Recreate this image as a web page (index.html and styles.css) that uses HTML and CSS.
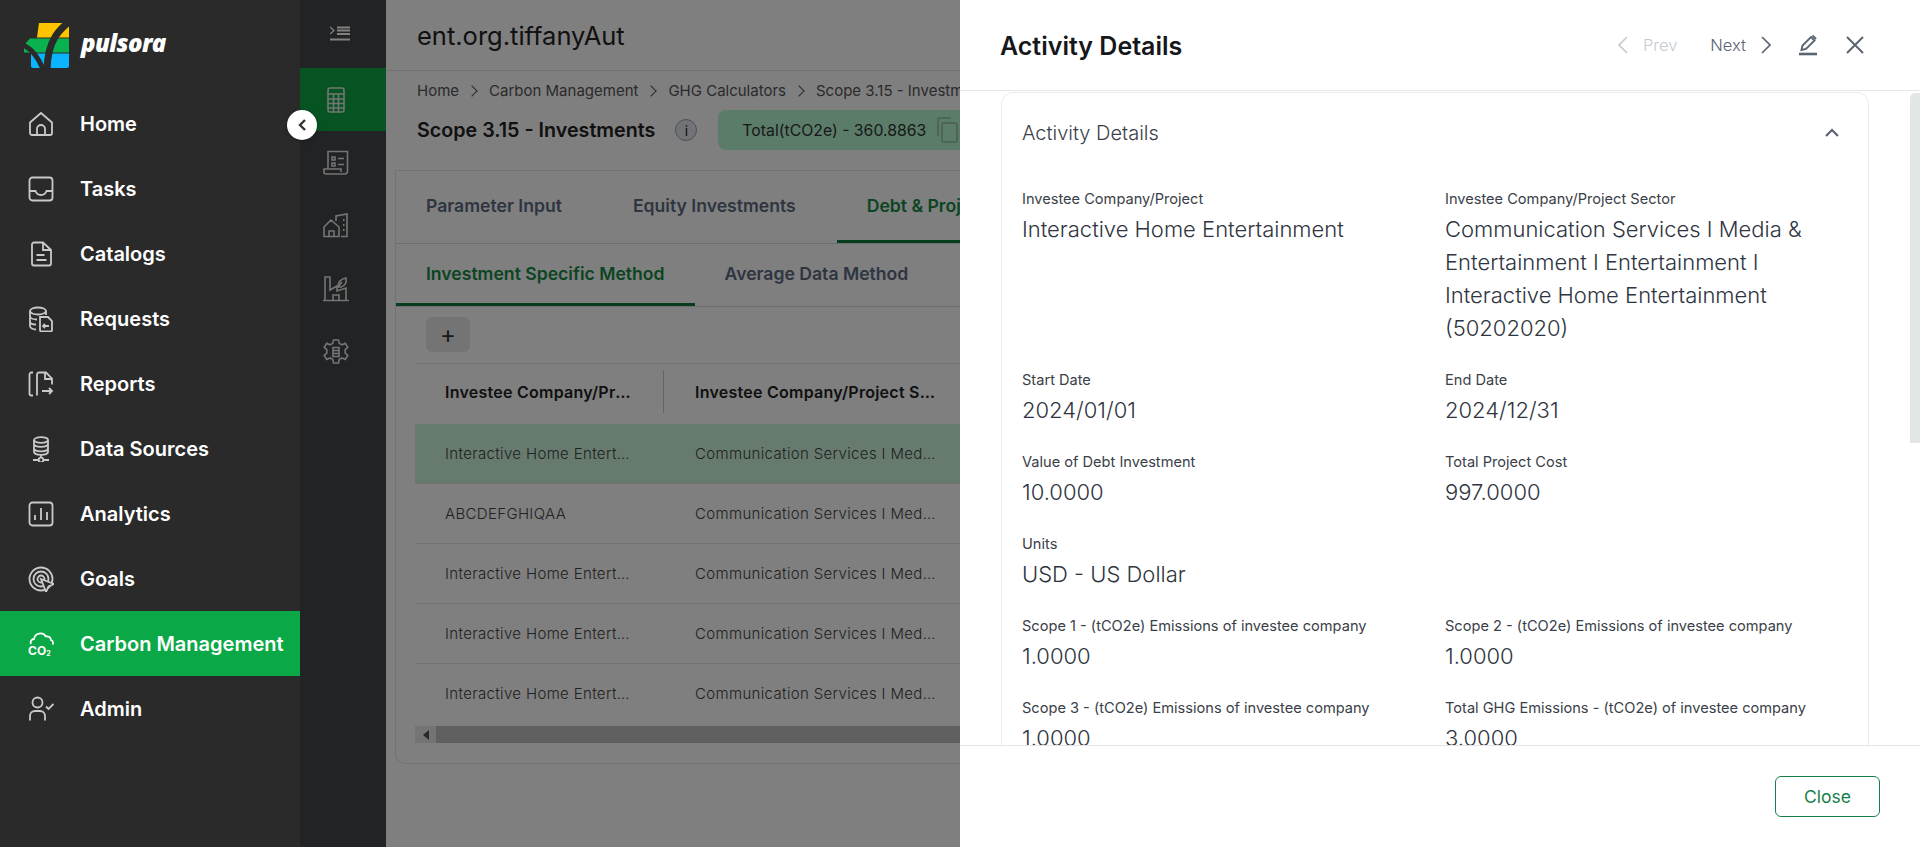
FILE: index.html
```html
<!DOCTYPE html>
<html lang="en">
<head>
  <meta charset="UTF-8" />
  <title>Pulsora - Scope 3.15 Investments</title>
  <link rel="stylesheet" href="styles.css">
</head>
<body>
  <div class="app">
    <aside class="sidebar">
      <div class="logo">
        <svg class="logo-mark" width="48" height="48" viewBox="0 0 48 48">
          <path d="M15 2h29a1 1 0 0 1 1 1v13.500H13z" fill="#ffc400"/>
          <path d="M6 17.500h39v14H0V24z" fill="#0ab14f"/>
          <path d="M7 32.500h38V45a2 2 0 0 1-2 2H9a2 2 0 0 1-2-2z" fill="#0bb4ff"/>
          <path d="M46 0C36 8 24 18 23 48" fill="none" stroke="#2a2a2a" stroke-width="7"/>
          <path d="M-1 24C8 28 14 36 19 48" fill="none" stroke="#2a2a2a" stroke-width="5"/>
        </svg>
        <span class="logo-text">pulsora</span>
      </div>
      <nav class="nav">
        <a class="nav-item">
          <svg class="nav-icon" viewBox="0 0 26 26"><path d="M2 22V11.500L13 2l11 9.500V22a2 2 0 0 1-2 2H4a2 2 0 0 1-2-2z"/><path d="M9 24v-6a4 4 0 0 1 8 0v6"/></svg>
          Home
        </a>
        <a class="nav-item">
          <svg class="nav-icon" viewBox="0 0 26 26"><rect x="1.500" y="1.500" width="23" height="23" rx="3"/><path d="M1.500 15h6c1 3 3 4 5.500 4s4.500-1 5.500-4h6"/></svg>
          Tasks
        </a>
        <a class="nav-item">
          <svg class="nav-icon" viewBox="0 0 26 26"><path d="M15 1.500H6a2 2 0 0 0-2 2v19a2 2 0 0 0 2 2h15a2 2 0 0 0 2-2V9z"/><path d="M15 1.500V9h8M8.500 14h8M8.500 19h10"/></svg>
          Catalogs
        </a>
        <a class="nav-item">
          <svg class="nav-icon" viewBox="0 0 26 26"><ellipse cx="10" cy="5" rx="8" ry="3.500"/><path d="M2 5v15c0 2 3 3.500 6 3.500M18 5v4M2 10c0 2 3 3.500 7 3.500M2 15.500c0 2 3 3 6 3"/><path d="M12 11h8l4 4v9a1.500 1.500 0 0 1-1.500 1.500h-9A1.500 1.500 0 0 1 12 24z"/><path d="M21 20h-6m2-2l-2 2 2 2"/></svg>
          Requests
        </a>
        <a class="nav-item">
          <svg class="nav-icon" viewBox="0 0 26 26"><path d="M5 1.500H3.500a2 2 0 0 0-2 2v19a2 2 0 0 0 2 2H5"/><path d="M9 24.500V3.500a2 2 0 0 1 2-2h7l6 6v6"/><path d="M17 2v6h7M14 20h10m-3-3l3 3-3 3"/></svg>
          Reports
        </a>
        <a class="nav-item">
          <svg class="nav-icon" viewBox="0 0 26 26"><ellipse cx="13" cy="4" rx="7" ry="2.800"/><path d="M6 4v12c0 1.500 3 2.800 7 2.800s7-1.300 7-2.800V4M6 8c0 1.500 3 2.800 7 2.800S20 9.500 20 8M6 12.500c0 1.500 3 2.800 7 2.800s7-1.300 7-2.800M13 19v2.500M5 24h5.500m5 0H21"/><circle cx="13" cy="24" r="2.300"/></svg>
          Data Sources
        </a>
        <a class="nav-item">
          <svg class="nav-icon" viewBox="0 0 26 26"><rect x="1.500" y="1.500" width="23" height="23" rx="3"/><path d="M7 19v-5M13 19V7M19 19v-8"/></svg>
          Analytics
        </a>
        <a class="nav-item">
          <svg class="nav-icon" viewBox="0 0 26 26"><circle cx="13" cy="13" r="11.500"/><circle cx="13" cy="13" r="7.500"/><circle cx="13" cy="13" r="3.500"/><path class="cursor" d="M13 13l13 5-5.500 2.500L18 26z"/></svg>
          Goals
        </a>
        <a class="nav-item is-active">
          <svg class="nav-icon" viewBox="0 0 26 26"><path d="M3 13a3.500 3.500 0 0 1 3-5A6.500 6.500 0 0 1 18 5.500a4 4 0 0 1 5 3.500 3 3 0 0 1 1.500 4.500"/><text class="co2" x="0" y="24">CO<tspan class="co2-sub" dy="1">2</tspan></text></svg>
          Carbon Management
        </a>
        <a class="nav-item">
          <svg class="nav-icon" viewBox="0 0 26 26"><circle cx="9.500" cy="6.500" r="5"/><path d="M2 24.500V20a5 5 0 0 1 5-5h5a5 5 0 0 1 5 5v4.500M18 10.500l2.500 2.500 5-5"/></svg>
          Admin
        </a>
      </nav>
      <button class="collapse-btn">
        <svg width="12" height="14" viewBox="0 0 12 14"><path d="M9 2L4 7l5 5" fill="none" stroke="#333" stroke-width="2.400"/></svg>
      </button>
    </aside>

    <div class="rail">
      <div class="rail-toggle">
        <svg width="20" height="16" viewBox="0 0 20 16"><path d="M0 1l4 3.500L0 8" fill="none" stroke="#828282" stroke-width="1.300"/><path d="M7 1.500h13M7 4.500h13M7 8h13M0 13.500h20" stroke="#828282" stroke-width="2"/></svg>
      </div>
      <a class="rail-item is-active">
        <svg class="rail-icon" viewBox="0 0 26 26"><rect x="5" y="1" width="16" height="24" rx="2"/><path d="M5 7h16M5 12h16M5 16.500h16M5 21h16M10.500 7v18M15.500 7v18"/></svg>
      </a>
      <a class="rail-item">
        <svg class="rail-icon" viewBox="0 0 26 26"><path d="M5 19V1.500h19.500V21a3 3 0 0 1-3 3H3a2 2 0 0 1-2-2v-3h17v3"/><path d="M9 7h3v3H9zM9 13h3v3H9zM15 8.500h6M15 14.500h6"/></svg>
      </a>
      <a class="rail-item">
        <svg class="rail-icon" viewBox="0 0 26 26"><path d="M1 23.500V14l7-7 8 7v9.500zM6 23.500V18h5v5.500M13 8V3l11-2v22.500h-6"/><path d="M20 7h1.500M20 12h1.500M20 17h1.500" stroke-width="2.200"/></svg>
      </a>
      <a class="rail-item">
        <svg class="rail-icon" viewBox="0 0 26 26"><path d="M0 24.500h26M2 24.500V1h5v13l7-4v5l9-3v12.500M10 24.500V19h6v5.500"/><path d="M15 11c0-5 3-8 8-9 1 4-1 8-5 9zM15 11l4-5"/></svg>
      </a>
      <a class="rail-item">
        <svg class="rail-icon" viewBox="0 0 26 26"><path d="M10.500 1h5l.8 3.500 2.700 1.300 3.300-1.500 2.500 4-2.600 2.400v3.400l2.600 2.400-2.500 4-3.300-1.500-2.700 1.300-.8 3.700h-5l-.8-3.700-2.700-1.300-3.300 1.500-2.500-4 2.600-2.400v-3.400L1.200 8.300l2.500-4L7 5.800l2.700-1.300z"/><path d="M10 8.500h6v9h-6zM10 11.500h6M10 14.500h6"/></svg>
      </a>
    </div>

    <main class="main">
      <header class="topbar">ent.org.tiffanyAut</header>
      <div class="crumbs">
        <span>Home</span><i class="crumb-sep"></i>
        <span>Carbon Management</span><i class="crumb-sep"></i>
        <span>GHG Calculators</span><i class="crumb-sep"></i>
        <span>Scope 3.15 - Investments</span>
      </div>
      <div class="page-title">
        <h1>Scope 3.15 - Investments</h1>
        <span class="info-dot">i</span>
        <div class="total-pill">
          Total(tCO2e) - 360.8863
          <svg width="22" height="26" viewBox="0 0 22 26"><path d="M2 19V3a2 2 0 0 1 2-2h11" fill="none" stroke="#9cc9ae" stroke-width="2"/><rect x="6" y="6" width="15" height="19" rx="2" fill="none" stroke="#9cc9ae" stroke-width="2"/></svg>
        </div>
      </div>
      <section class="panel">
        <div class="tabs">
          <a class="tab">Parameter Input</a>
          <a class="tab">Equity Investments</a>
          <a class="tab is-active">Debt &amp; Project Finance</a>
        </div>
        <div class="tabs sub-tabs">
          <a class="tab is-active">Investment Specific Method</a>
          <a class="tab">Average Data Method</a>
        </div>
        <div class="toolbar"><button class="add-btn">+</button></div>
        <div class="grid">
          <div class="grid-head">
            <div class="cell first"><span class="ellip">Investee Company/Project</span></div>
            <div class="cell second"><span class="ellip">Investee Company/Project Sector</span></div>
          </div>
          <div class="grid-row is-selected">
            <div class="cell first"><span class="ellip">Interactive Home Entertainment</span></div>
            <div class="cell second"><span class="ellip">Communication Services I Media &amp; Entertainment</span></div>
          </div>
          <div class="grid-row">
            <div class="cell first"><span class="ellip">ABCDEFGHIQAA</span></div>
            <div class="cell second"><span class="ellip">Communication Services I Media &amp; Entertainment</span></div>
          </div>
          <div class="grid-row">
            <div class="cell first"><span class="ellip">Interactive Home Entertainment</span></div>
            <div class="cell second"><span class="ellip">Communication Services I Media &amp; Entertainment</span></div>
          </div>
          <div class="grid-row">
            <div class="cell first"><span class="ellip">Interactive Home Entertainment</span></div>
            <div class="cell second"><span class="ellip">Communication Services I Media &amp; Entertainment</span></div>
          </div>
          <div class="grid-row">
            <div class="cell first"><span class="ellip">Interactive Home Entertainment</span></div>
            <div class="cell second"><span class="ellip">Communication Services I Media &amp; Entertainment</span></div>
          </div>
          <div class="grid-scroll">
            <span class="scroll-arrow"></span>
            <span class="scroll-thumb"></span>
          </div>
        </div>
      </section>
    </main>

    <div class="drawer">
      <header class="drawer-head">
        <h2>Activity Details</h2>
        <div class="drawer-actions">
          <span class="pager is-disabled">
            <svg width="12" height="20" viewBox="0 0 12 20"><path d="M10 2L2 10l8 8" fill="none" stroke="#c6cad0" stroke-width="1.700"/></svg>
            Prev
          </span>
          <span class="pager">
            Next
            <svg width="12" height="20" viewBox="0 0 12 20"><path d="M2 2l8 8-8 8" fill="none" stroke="#5b6472" stroke-width="1.700"/></svg>
          </span>
          <svg class="edit-icon" width="20" height="22" viewBox="0 0 20 22"><path d="M3.500 16l1-4.500L13 3l3.500 3.500L8 15z" fill="none" stroke="#5b6472" stroke-width="1.900"/><path d="M14.500 1.500l3.500 3.500" stroke="#5b6472" stroke-width="1.900"/><path d="M1 20h18" stroke="#5b6472" stroke-width="2.600"/></svg>
          <svg class="close-icon" width="20" height="20" viewBox="0 0 20 20"><path d="M2 2l16 16M18 2L2 18" stroke="#5b6472" stroke-width="2"/></svg>
        </div>
      </header>
      <div class="drawer-body">
        <div class="detail-card">
          <div class="detail-head">
            <span>Activity Details</span>
            <svg width="16" height="10" viewBox="0 0 16 10"><path d="M2 8l6-6 6 6" fill="none" stroke="#5b6472" stroke-width="2.200"/></svg>
          </div>
          <div class="fields">
            <div class="field"><label>Investee Company/Project</label><div class="value">Interactive Home Entertainment</div></div>
            <div class="field"><label>Investee Company/Project Sector</label><div class="value">Communication Services I Media &amp; Entertainment I Entertainment I Interactive Home Entertainment (50202020)</div></div>
            <div class="field"><label>Start Date</label><div class="value">2024/01/01</div></div>
            <div class="field"><label>End Date</label><div class="value">2024/12/31</div></div>
            <div class="field"><label>Value of Debt Investment</label><div class="value">10.0000</div></div>
            <div class="field"><label>Total Project Cost</label><div class="value">997.0000</div></div>
            <div class="field full"><label>Units</label><div class="value">USD - US Dollar</div></div>
            <div class="field"><label>Scope 1 - (tCO2e) Emissions of investee company</label><div class="value">1.0000</div></div>
            <div class="field"><label>Scope 2 - (tCO2e) Emissions of investee company</label><div class="value">1.0000</div></div>
            <div class="field"><label>Scope 3 - (tCO2e) Emissions of investee company</label><div class="value">1.0000</div></div>
            <div class="field"><label>Total GHG Emissions - (tCO2e) of investee company</label><div class="value">3.0000</div></div>
          </div>
        </div>
        <span class="drawer-scroll"></span>
      </div>
      <footer class="drawer-foot">
        <button class="close-btn">Close</button>
      </footer>
    </div>
  </div>
</body>
</html>
```

FILE: styles.css
```css
:root {
  --side-bg: #2a2a2a;
  --rail-bg: #222325;
  --green: #0aa846;
  --green-dark: #17804a;
  --text: #2f3540;
}

* {
  box-sizing: border-box;
}

body {
  margin: 0;
  height: 847px;
  overflow: hidden;
  font-family: Inter, "Noto Sans", sans-serif;
  color: var(--text);
}

.app {
  display: flex;
  position: relative;
  height: 847px;
  overflow: hidden;
}

/* left nav */
.sidebar {
  position: relative;
  flex: 0 0 300px;
  background: var(--side-bg);
}

.logo {
  display: flex;
  align-items: center;
  height: 91px;
  padding: 0 0 1px 24px;
}

.logo-mark {
  flex: none;
  overflow: hidden;
}

.logo-text {
  margin: 0 0 5px 9px;
  font-family: "Open Sans", sans-serif;
  font-size: 24px;
  font-weight: 800;
  font-style: italic;
  letter-spacing: -0.6px;
  color: #fff;
}

.nav-item {
  display: flex;
  align-items: center;
  height: 65px;
  padding-left: 28px;
  font-size: 20px;
  font-weight: 600;
  color: #fff;
}

.nav-item.is-active {
  background: var(--green);
}

.nav-icon {
  width: 26px;
  height: 26px;
  margin-right: 26px;
  fill: none;
  stroke: #c9c9c9;
  stroke-width: 1.8;
}

.is-active .nav-icon {
  stroke: #fff;
}

.cursor {
  fill: var(--side-bg);
}

.co2 {
  fill: #fff;
  stroke: none;
  font-size: 12px;
  font-weight: 700;
}

.co2-sub {
  font-size: 7px;
}

.collapse-btn {
  position: absolute;
  top: 110px;
  right: -17px;
  z-index: 3;
  display: flex;
  align-items: center;
  justify-content: center;
  width: 30px;
  height: 30px;
  padding: 0;
  border: none;
  border-radius: 50%;
  background: #fff;
  box-shadow: 0 1px 4px rgba(0, 0, 0, 0.3);
}

/* second rail */
.rail {
  flex: 0 0 86px;
  background: var(--rail-bg);
}

.rail-toggle {
  display: flex;
  align-items: center;
  height: 68px;
  padding: 0 0 0 30px;
}

.rail-item {
  display: flex;
  align-items: center;
  height: 63px;
  padding-left: 23px;
}

.rail-item.is-active {
  background: #075423;
}

.rail-icon {
  width: 26px;
  height: 26px;
  fill: none;
  stroke: #757575;
  stroke-width: 1.6;
}

/* dimmed page */
.main {
  position: relative;
  flex: 1;
  min-width: 0;
  background: #fff;
}

.main::after {
  content: "";
  position: absolute;
  inset: 0;
  background: rgba(0, 0, 0, 0.5);
}

.topbar {
  height: 71px;
  padding: 18px 0 0 31px;
  border-bottom: 1px solid #e2e2e2;
  font-size: 25.5px;
  line-height: 35px;
  color: #222;
}

.crumbs {
  display: flex;
  align-items: center;
  height: 39px;
  padding-left: 31px;
  font-size: 15px;
  color: #555;
  white-space: nowrap;
}

.crumb-sep {
  flex: none;
  width: 8px;
  height: 8px;
  margin: 0 13px 0 9px;
  border-top: 1px solid #555;
  border-right: 1px solid #555;
  transform: rotate(45deg);
}

.page-title {
  display: flex;
  align-items: center;
  height: 40px;
  margin-bottom: 20px;
  padding-left: 31px;
}

.page-title h1 {
  margin: 0;
  font-size: 19.7px;
  font-weight: 600;
  color: #222;
}

.info-dot {
  display: flex;
  align-items: center;
  justify-content: center;
  width: 22px;
  height: 22px;
  margin-left: 20px;
  border: 1px solid #98a2b3;
  border-radius: 50%;
  background: #e4e7ec;
  font-size: 14px;
  color: #222;
}

.total-pill {
  display: flex;
  align-items: center;
  flex: none;
  gap: 10px;
  height: 40px;
  margin-left: 21px;
  padding: 0 24px;
  border-radius: 8px;
  background: #b5f8d2;
  font-size: 15.8px;
  color: #333;
}

.panel {
  height: 594px;
  margin-left: 9px;
  border: 1px solid #e6e6e6;
  border-right: none;
  border-radius: 0 0 0 10px;
}

.tabs {
  display: flex;
  gap: 11px;
  height: 73px;
  border-bottom: 1px solid #dcdcdc;
}

.sub-tabs {
  gap: 0;
  height: 63px;
}

.tab {
  display: flex;
  align-items: center;
  flex: none;
  padding: 0 30px;
  border-bottom: 3px solid transparent;
  font-size: 17.6px;
  font-weight: 600;
  color: #5c6b82;
  white-space: nowrap;
}

.tab.is-active {
  color: #178a46;
  border-bottom-color: #0e7a3c;
}

.toolbar {
  height: 57px;
  margin-left: 19px;
  padding: 10px 0 0 11px;
  border-bottom: 1px solid #e6e6e6;
}

.add-btn {
  width: 44px;
  height: 35px;
  padding: 0;
  border: none;
  border-radius: 6px;
  background: #e8e8e8;
  font-family: inherit;
  font-size: 24px;
  color: #333;
}

.grid {
  margin-left: 19px;
}

.grid-head,
.grid-row {
  display: flex;
  align-items: center;
  font-size: 15px;
}

.grid-head {
  height: 60px;
  padding-bottom: 4px;
  font-size: 16px;
  font-weight: 600;
  letter-spacing: 0.25px;
  color: #222;
}

.grid-row {
  height: 60px;
  border-bottom: 1px solid #e2e2e2;
  font-weight: 300;
  letter-spacing: 0.35px;
  color: #444;
}

.grid-row.is-selected {
  background: #ccf6dc;
}

.grid-row:nth-child(6) {
  height: 59px;
  border-bottom: none;
}

.cell {
  flex: none;
  min-width: 0;
}

.cell.first {
  position: relative;
  width: 249px;
  padding: 0 32px 0 30px;
}

.grid-head .cell.first::after {
  content: "";
  position: absolute;
  right: 0;
  top: -12px;
  height: 43px;
  border-right: 1px solid #c8c8c8;
}

.cell.second {
  width: 306px;
  padding: 0 31px;
}

.ellip {
  display: block;
  overflow: hidden;
  white-space: nowrap;
  text-overflow: ellipsis;
}

.grid-scroll {
  display: flex;
  height: 17px;
  margin-top: 3px;
  background: #e8e8e8;
}

.scroll-arrow {
  display: flex;
  align-items: center;
  justify-content: center;
  flex: 0 0 21px;
}

.scroll-arrow::before {
  content: "";
  border: solid transparent;
  border-width: 5px 6px 5px 0;
  border-right-color: #505050;
}

.scroll-thumb {
  flex: 1;
  background: #c1c1c1;
}

/* right drawer */
.drawer {
  position: absolute;
  top: 0;
  right: 0;
  bottom: 0;
  z-index: 2;
  display: flex;
  flex-direction: column;
  width: 960px;
  background: #fff;
}

.drawer-head {
  display: flex;
  align-items: center;
  justify-content: space-between;
  flex: 0 0 91px;
  padding: 0 55px 0 40px;
  border-bottom: 1px solid #e3e8e6;
}

.drawer-head h2 {
  margin: 2px 0 0;
  font-size: 25px;
  font-weight: 600;
  color: #15171a;
}

.drawer-actions {
  display: flex;
  align-items: center;
  gap: 24px;
  color: #5b6472;
}

.pager {
  display: flex;
  align-items: center;
  gap: 14px;
  margin-right: 2px;
  font-size: 16.5px;
  font-weight: 300;
}

.pager.is-disabled {
  margin-right: 9px;
  color: #c6cad0;
}

.close-icon {
  margin-left: 3px;
}

.drawer-body {
  position: relative;
  flex: 1;
  overflow: hidden;
}

.detail-card {
  width: 868px;
  height: 800px;
  margin: 1px 0 0 41px;
  border: 1px solid #e9ebec;
  border-radius: 12px;
}

.detail-head {
  display: flex;
  align-items: center;
  justify-content: space-between;
  height: 80px;
  padding: 0 28px 0 20px;
  font-size: 20px;
  font-weight: 300;
  color: #3a4048;
}

.fields {
  display: grid;
  grid-template-columns: 423px 1fr;
  row-gap: 25px;
  padding: 16px 0 0 20px;
}

.field.full {
  grid-column: 1 / -1;
}

.field label {
  display: block;
  font-size: 14.6px;
  line-height: 20px;
  color: #3a4048;
}

.value {
  max-width: 370px;
  margin-top: 4px;
  font-size: 22px;
  font-weight: 300;
  line-height: 33px;
  color: #2f3540;
}

.drawer-scroll {
  position: absolute;
  top: 2px;
  right: 0;
  width: 10px;
  height: 350px;
  border-radius: 5px 0 0 0;
  background: #e2e7e5;
}

.drawer-foot {
  display: flex;
  align-items: center;
  justify-content: flex-end;
  flex: 0 0 102px;
  padding-right: 40px;
  border-top: 1px solid #e4e4e4;
}

.close-btn {
  width: 105px;
  height: 41px;
  padding: 0;
  border: 1px solid var(--green-dark);
  border-radius: 6px;
  background: #fff;
  font-family: inherit;
  font-size: 17.5px;
  color: var(--green-dark);
}
```
